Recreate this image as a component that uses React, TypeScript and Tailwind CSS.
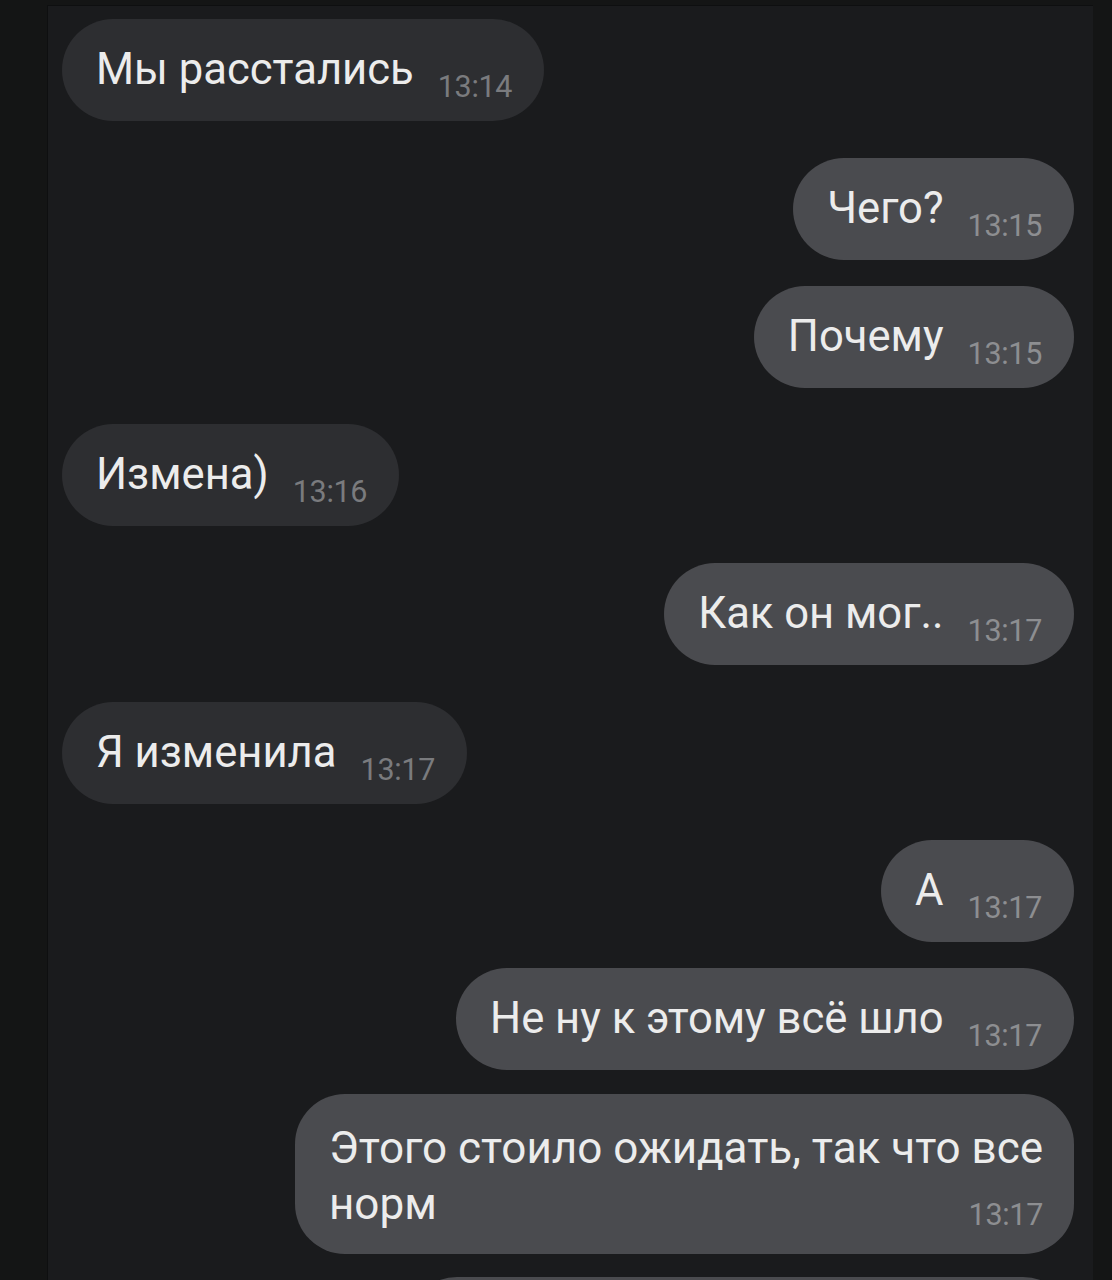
import React from 'react';

type Msg = {
  text: string;
  time: string;
  out?: boolean;
  gap: number;
};

const messages: Msg[] = [
  { text: 'Мы расстались', time: '13:14', gap: 13 },
  { text: 'Чего?', time: '13:15', out: true, gap: 37 },
  { text: 'Почему', time: '13:15', out: true, gap: 26 },
  { text: 'Измена)', time: '13:16', gap: 36 },
  { text: 'Как он мог..', time: '13:17', out: true, gap: 37 },
  { text: 'Я изменила', time: '13:17', gap: 37 },
  { text: 'А', time: '13:17', out: true, gap: 36 },
  { text: 'Не ну к этому всё шло', time: '13:17', out: true, gap: 26 },
];

const gapClass: Record<number, string> = {
  13: 'mt-[13px]',
  26: 'mt-[26px]',
  36: 'mt-[36px]',
  37: 'mt-[37px]',
};

function Bubble({ msg }: { msg: Msg }) {
  return (
    <div className={`flex ${msg.out ? 'justify-end' : 'justify-start'} ${gapClass[msg.gap]}`}>
      <div
        className={`flex h-[102px] items-center rounded-full pl-[34px] pr-[32px] ${
          msg.out ? 'bg-[#4a4b4f]' : 'bg-[#2d2e31]'
        }`}
      >
        <span className="text-[43.6px] leading-none text-[#ececec] whitespace-nowrap">{msg.text}</span>
        <span
          className={`ml-[24px] self-end mb-[19px] text-[30.5px] leading-none tracking-[-0.3px] ${
            msg.out ? 'text-[#8d8e91]' : 'text-[#7a7b7e]'
          }`}
        >
          {msg.time}
        </span>
      </div>
    </div>
  );
}

export default function App() {
  return (
    <div
      className="h-[1280px] w-[1112px] overflow-hidden bg-[#141515] pt-[5px]"
      style={{ fontFamily: 'Roboto, "Noto Sans", sans-serif' }}
    >
      <div className="ml-[47px] mr-[19px] h-full border-l border-t border-[#0e0f10] bg-[#1a1b1d] pl-[14px] pr-[19px]">
        {messages.map((m, i) => (
          <Bubble key={i} msg={m} />
        ))}

        {/* multi-line message */}
        <div className="mt-[24px] flex justify-end">
          <div className="flex h-[160px] flex-col justify-center rounded-[50px] bg-[#4a4b4f] pl-[34px] pr-[31px] pt-[4px]">
            <span className="text-[44px] leading-[56px] text-[#ececec] whitespace-nowrap">
              Этого стоило ожидать, так что все
            </span>
            <div className="flex items-end justify-between">
              <span className="text-[44px] leading-[56px] text-[#ececec]">норм</span>
              <span className="mb-[2px] text-[30.5px] leading-none tracking-[-0.3px] text-[#8d8e91]">13:17</span>
            </div>
          </div>
        </div>

        {/* next bubble, cut off */}
        <div className="mt-[23px] flex justify-end">
          <div className="h-[102px] w-[668px] rounded-full bg-[#4a4b4f]" />
        </div>
      </div>
    </div>
  );
}
